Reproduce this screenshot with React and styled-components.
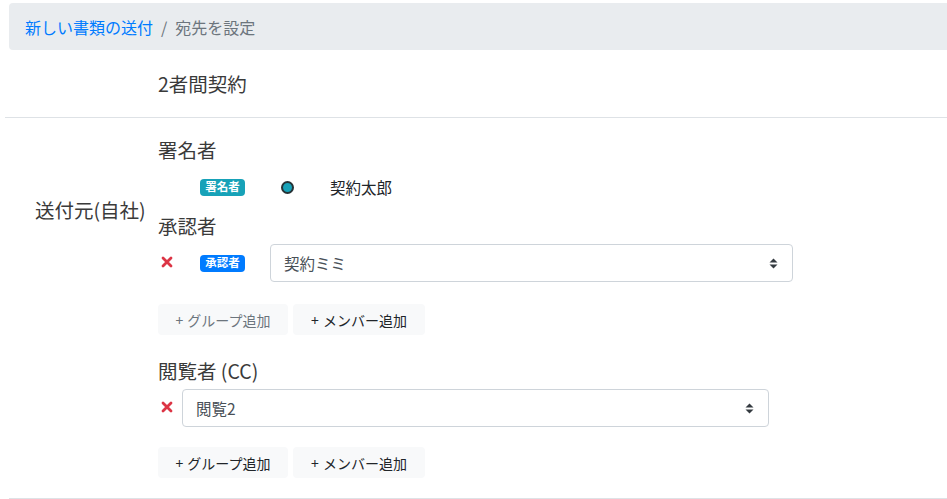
import React from "react";
import styled, { createGlobalStyle } from "styled-components";

const Global = createGlobalStyle`
  html, body { margin: 0; padding: 0; background: #fff; overflow: hidden; }
  body { font-family: "Noto Sans CJK JP", "Noto Sans", sans-serif; color: #212529; }
  * { box-sizing: border-box; }
`;

const Page = styled.div`
  width: 947px;
  padding-top: 3px;
`;

const Breadcrumb = styled.nav`
  margin-left: 9px;
  margin-right: -6px;
  height: 47px;
  background: #e9ecef;
  border-radius: 4px;
  display: flex;
  align-items: center;
  padding-left: 16px;
  font-size: 16px;
  gap: 8px;
`;

const Crumb = styled.span`
  color: ${(p) => (p.$active ? "#6c757d" : "#007bff")};
`;

const Sep = styled.span`
  color: #6c757d;
`;

const TitleRow = styled.div`
  height: 68px;
  display: flex;
  align-items: center;
  font-size: 19.5px;
  color: #3a3a3a;
  margin-left: 5px;
  padding-left: 153px;
  border-bottom: 1px solid #dee2e6;
`;

const Section = styled.section`
  display: grid;
  grid-template-columns: 158px 1fr;
  margin-left: 9px;
  border-bottom: 1px solid #dee2e6;
  padding-bottom: 20px;
`;

const SideLabel = styled.div`
  padding-top: 77px;
  padding-left: 26px;
  font-size: 19.5px;
  line-height: 30px;
  color: #3a3a3a;
`;

const Main = styled.div`
  padding-top: 17px;
  margin-left: -9px;
  display: flex;
  flex-direction: column;
`;

const Heading = styled.h3`
  margin: ${(p) => p.$mt || 0}px 0 0 0;
  font-size: 19.5px;
  font-weight: 400;
  line-height: 30px;
  color: #3a3a3a;
`;

const SignerRow = styled.div`
  margin-top: 10px;
  height: 24px;
  display: flex;
  align-items: center;
  padding-left: 42px;
`;

const Badge = styled.span`
  display: inline-flex;
  align-items: center;
  justify-content: center;
  width: 45px;
  height: 17px;
  border-radius: 4px;
  background: ${(p) => p.$color};
  color: #fff;
  font-size: 11.5px;
  font-weight: 700;
  line-height: 1;
`;

const Radio = styled.span`
  width: 13px;
  height: 13px;
  border-radius: 50%;
  background: #17a2b8;
  border: 2px solid #263236;
  margin-left: 36px;
`;

const SignerName = styled.span`
  margin-left: 36px;
  font-size: 15.5px;
  color: #212529;
`;

const MemberRow = styled.div`
  margin-top: 3px;
  display: flex;
  align-items: center;
`;

const RemoveIcon = styled.span`
  width: 24px;
  display: flex;
  justify-content: flex-start;
  padding-left: 3px;
  margin-top: -2px;
`;

const SelectBox = styled.div`
  width: ${(p) => p.$w}px;
  height: 38px;
  border: 1px solid #ced4da;
  border-radius: 4px;
  display: flex;
  align-items: center;
  justify-content: space-between;
  padding: 0 14px 0 13px;
  font-size: 15.5px;
  color: #495057;
  background: #fff;
`;

const BadgeCell = styled.span`
  width: 88px;
  padding-left: 18px;
  display: flex;
`;

const Buttons = styled.div`
  margin-top: ${(p) => p.$mt}px;
  display: flex;
  gap: 5px;
`;

const Btn = styled.button`
  width: ${(p) => p.$w}px;
  height: 31px;
  border: none;
  border-radius: 4px;
  background: #f8f9fa;
  color: ${(p) => (p.$muted ? "#6c757d" : "#212529")};
  font-family: inherit;
  font-size: 14px;
  padding: 0;
  word-spacing: 1px;
`;

const Cross = () => (
  <svg width="12" height="12" viewBox="0 0 12 12">
    <path d="M2 2 L10 10 M10 2 L2 10" stroke="#dc3545" strokeWidth="2.8" strokeLinecap="round" />
  </svg>
);

const Updown = () => (
  <svg width="9" height="11" viewBox="0 0 9 11">
    <path d="M4.5 0.5 L8.5 4.5 H0.5 Z M4.5 10.5 L8.5 6.5 H0.5 Z" fill="#343a40" />
  </svg>
);

export default function App() {
  return (
    <Page>
      <Global />
      <Breadcrumb>
        <Crumb>新しい書類の送付</Crumb>
        <Sep>/</Sep>
        <Crumb $active>宛先を設定</Crumb>
      </Breadcrumb>
      <TitleRow>2者間契約</TitleRow>
      <Section>
        <SideLabel>送付元(自社)</SideLabel>
        <Main>
          <Heading>署名者</Heading>
          <SignerRow>
            <Badge $color="#17a2b8">署名者</Badge>
            <Radio />
            <SignerName>契約太郎</SignerName>
          </SignerRow>
          <Heading $mt={12}>承認者</Heading>
          <MemberRow>
            <RemoveIcon>
              <Cross />
            </RemoveIcon>
            <BadgeCell>
              <Badge $color="#007bff">承認者</Badge>
            </BadgeCell>
            <SelectBox $w={523}>
              <span>契約ミミ</span>
              <Updown />
            </SelectBox>
          </MemberRow>
          <Buttons $mt={22}>
            <Btn $w={130} $muted>+ グループ追加</Btn>
            <Btn $w={132}>+ メンバー追加</Btn>
          </Buttons>
          <Heading $mt={21}>閲覧者 (CC)</Heading>
          <MemberRow>
            <RemoveIcon>
              <Cross />
            </RemoveIcon>
            <SelectBox $w={587}>
              <span>閲覧2</span>
              <Updown />
            </SelectBox>
          </MemberRow>
          <Buttons $mt={20}>
            <Btn $w={130}>+ グループ追加</Btn>
            <Btn $w={132}>+ メンバー追加</Btn>
          </Buttons>
        </Main>
      </Section>
    </Page>
  );
}
